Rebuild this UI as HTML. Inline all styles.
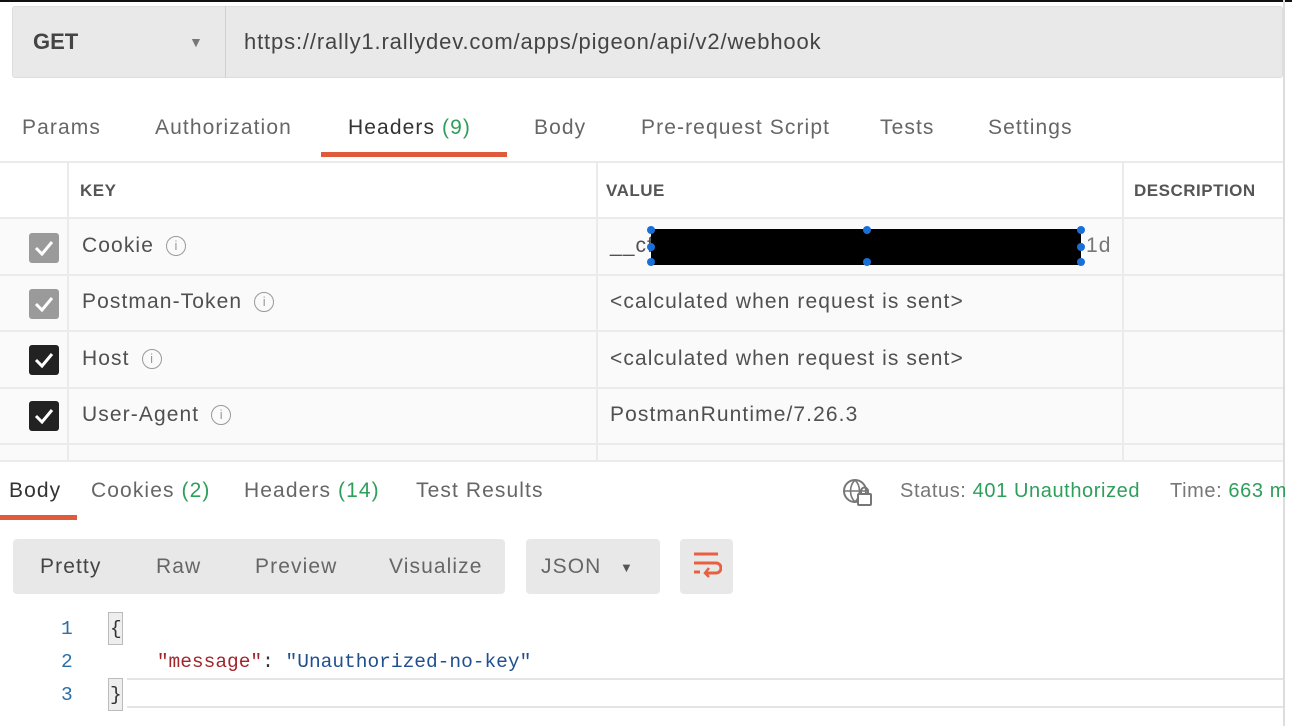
<!DOCTYPE html>
<html><head><style>
*{margin:0;padding:0;box-sizing:border-box}
body{width:1292px;height:726px;background:#fff;position:relative;overflow:hidden;font-family:"Liberation Sans",sans-serif;color:#505050}
.a{position:absolute;white-space:nowrap}
.g{color:#2e9e5b}
.cb{position:absolute;left:29px;width:30px;height:30px;border-radius:3px;background:#9a9a9a}
.cb.d{background:#222}
.cb svg{position:absolute;left:4px;top:5px}
.info{display:inline-block;width:20px;height:20px;border:1.5px solid #999;border-radius:50%;font-size:13px;text-align:center;line-height:17px;color:#999;margin-left:12px;vertical-align:2px;letter-spacing:0}
.row{position:absolute;left:0;width:1283px;background:#fafafa;border-bottom:2px solid #ebebeb}
.h{font-size:21px;letter-spacing:1.1px}
</style></head><body>
<div class="a" style="left:0;top:0;width:1292px;height:2px;background:#111"></div>
<div class="a" style="left:1283px;top:0;width:2px;height:726px;background:#ddd"></div>
<div class="a" style="left:12px;top:6px;width:1271px;height:72px;background:#e9e9e9;border:1px solid #ddd;border-radius:3px"></div>
<div class="a" style="left:225px;top:6px;width:1px;height:72px;background:#d0d0d0"></div>
<div class="a" style="left:33px;top:29px;font-size:22px;font-weight:bold;color:#444">GET</div>
<div class="a" style="left:189px;top:34px;font-size:14px;color:#777">▼</div>
<div class="a" style="left:244px;top:29px;font-size:22px;color:#444;letter-spacing:0.85px">https://rally1.rallydev.com/apps/pigeon/api/v2/webhook</div>
<div class="a h" style="left:22px;top:116px;color:#666">Params</div>
<div class="a h" style="left:155px;top:116px;color:#666">Authorization</div>
<div class="a h" style="left:348px;top:116px;color:#333">Headers <span class="g">(9)</span></div>
<div class="a" style="left:321px;top:152px;width:186px;height:5px;background:#e05b3c"></div>
<div class="a h" style="left:534px;top:116px;color:#666">Body</div>
<div class="a h" style="left:641px;top:116px;color:#666">Pre-request Script</div>
<div class="a h" style="left:880px;top:116px;color:#666">Tests</div>
<div class="a h" style="left:988px;top:116px;color:#666">Settings</div>
<div class="row" style="top:161px;height:58px;background:#fff;border-top:2px solid #ebebeb"></div>
<div class="row" style="top:219px;height:57px"></div>
<div class="row" style="top:276px;height:56px"></div>
<div class="row" style="top:332px;height:57px"></div>
<div class="row" style="top:389px;height:56px"></div>
<div class="row" style="top:445px;height:17px"></div>
<div class="a" style="left:67px;top:161px;width:2px;height:301px;background:#ebebeb"></div>
<div class="a" style="left:596px;top:161px;width:2px;height:301px;background:#ebebeb"></div>
<div class="a" style="left:1122px;top:161px;width:2px;height:301px;background:#ebebeb"></div>
<div class="a" style="left:80px;top:181px;font-size:17px;font-weight:bold;color:#555;letter-spacing:0.5px">KEY</div>
<div class="a" style="left:606px;top:181px;font-size:17px;font-weight:bold;color:#555;letter-spacing:0.5px">VALUE</div>
<div class="a" style="left:1134px;top:181px;font-size:17px;font-weight:bold;color:#555;letter-spacing:0.5px">DESCRIPTION</div>
<div class="cb" style="top:233px"><svg width="22" height="20"><path d="M3 10l6 6L19 4" stroke="#fff" stroke-width="3" fill="none"/></svg></div>
<div class="cb" style="top:289px"><svg width="22" height="20"><path d="M3 10l6 6L19 4" stroke="#fff" stroke-width="3" fill="none"/></svg></div>
<div class="cb d" style="top:345px"><svg width="22" height="20"><path d="M3 10l6 6L19 4" stroke="#fff" stroke-width="3" fill="none"/></svg></div>
<div class="cb d" style="top:401px"><svg width="22" height="20"><path d="M3 10l6 6L19 4" stroke="#fff" stroke-width="3" fill="none"/></svg></div>
<div class="a h" style="left:82px;top:234px">Cookie<span class="info">i</span></div>
<div class="a h" style="left:82px;top:290px">Postman-Token<span class="info">i</span></div>
<div class="a h" style="left:82px;top:347px">Host<span class="info">i</span></div>
<div class="a h" style="left:82px;top:403px">User-Agent<span class="info">i</span></div>
<div class="a h" style="left:610px;top:234px">__cf</div>
<div class="a" style="left:651px;top:229px;width:430px;height:36px;background:#000"></div>
<div class="a h" style="left:1086px;top:234px;color:#777">1d</div>
<div class="a" style="left:647px;top:226px;width:8px;height:8px;border-radius:50%;background:#1a6fd6"></div>
<div class="a" style="left:647px;top:243px;width:8px;height:8px;border-radius:50%;background:#1a6fd6"></div>
<div class="a" style="left:647px;top:258px;width:8px;height:8px;border-radius:50%;background:#1a6fd6"></div>
<div class="a" style="left:863px;top:226px;width:8px;height:8px;border-radius:50%;background:#1a6fd6"></div>
<div class="a" style="left:863px;top:258px;width:8px;height:8px;border-radius:50%;background:#1a6fd6"></div>
<div class="a" style="left:1077px;top:226px;width:8px;height:8px;border-radius:50%;background:#1a6fd6"></div>
<div class="a" style="left:1077px;top:243px;width:8px;height:8px;border-radius:50%;background:#1a6fd6"></div>
<div class="a" style="left:1077px;top:258px;width:8px;height:8px;border-radius:50%;background:#1a6fd6"></div>
<div class="a h" style="left:610px;top:290px">&lt;calculated when request is sent&gt;</div>
<div class="a h" style="left:610px;top:347px">&lt;calculated when request is sent&gt;</div>
<div class="a h" style="left:610px;top:403px">PostmanRuntime/7.26.3</div>
<div class="a h" style="left:9px;top:479px;color:#333">Body</div>
<div class="a" style="left:0;top:515px;width:77px;height:5px;background:#e05b3c"></div>
<div class="a h" style="left:91px;top:479px;color:#666">Cookies <span class="g">(2)</span></div>
<div class="a h" style="left:244px;top:479px;color:#666">Headers <span class="g">(14)</span></div>
<div class="a h" style="left:416px;top:479px;color:#666">Test Results</div>
<svg class="a" style="left:842px;top:478px" width="32" height="30"><circle cx="13" cy="13" r="11" stroke="#777" stroke-width="2" fill="none"/><path d="M2 13h22M13 2c-6 6-6 16 0 22M13 2c6 6 6 16 0 22" stroke="#777" stroke-width="1.6" fill="none"/><rect x="16" y="16" width="13" height="11" rx="1" fill="#fff" stroke="#777" stroke-width="2"/><path d="M19 16v-3a3.5 3.5 0 0 1 7 0v3" stroke="#777" stroke-width="2" fill="none"/></svg>
<div class="a" style="left:900px;top:480px;font-size:20px;color:#777;letter-spacing:0.6px">Status: <span class="g">401 Unauthorized</span></div>
<div class="a" style="left:1170px;top:480px;font-size:20px;color:#777;letter-spacing:0.6px">Time: <span class="g">663 ms</span></div>
<div class="a" style="left:1285px;top:460px;width:7px;height:266px;background:#fff"></div>
<div class="a" style="left:13px;top:539px;height:55px;background:#e8e8e8;border-radius:4px;width:492px"></div>
<div class="a h" style="left:40px;top:555px;color:#444">Pretty</div>
<div class="a h" style="left:156px;top:555px;color:#666">Raw</div>
<div class="a h" style="left:255px;top:555px;color:#666">Preview</div>
<div class="a h" style="left:389px;top:555px;color:#666">Visualize</div>
<div class="a" style="left:526px;top:539px;width:134px;height:55px;background:#e8e8e8;border-radius:4px"></div>
<div class="a h" style="left:541px;top:555px;color:#666">JSON</div>
<div class="a" style="left:620px;top:560px;font-size:13px;color:#555">▼</div>
<div class="a" style="left:680px;top:539px;width:53px;height:55px;background:#e8e8e8;border-radius:4px"></div>
<svg class="a" style="left:692px;top:551px" width="30" height="30"><path d="M2 3h24M2 12h22a5 5 0 0 1 0 10h-10M2 21h6" stroke="#e8603f" stroke-width="3" fill="none"/><path d="M17 17l-4 5 4 4" stroke="#e8603f" stroke-width="2.5" fill="none"/></svg>
<div class="a" style="left:127px;top:678px;width:1156px;height:30px;border-top:2px solid #e4e4e4;border-bottom:2px solid #e4e4e4"></div>
<div class="a" style="font-family:'Liberation Mono',monospace;font-size:19.5px;left:61px;top:613px;line-height:33px;color:#2a6fa8">1<br>2<br>3</div>
<div class="a" style="left:108px;top:612px;width:15px;height:33px;background:#eee;border:1px solid #bbb"></div>
<div class="a" style="left:108px;top:678px;width:15px;height:33px;background:#eee;border:1px solid #bbb"></div>
<div class="a" style="font-family:'Liberation Mono',monospace;font-size:19.5px;left:110px;top:613px;line-height:33px;color:#333">{<br>&nbsp;&nbsp;&nbsp;&nbsp;<span style="color:#a1262b">"message"</span>: <span style="color:#1f4f8f">"Unauthorized-no-key"</span><br>}</div>
</body></html>
